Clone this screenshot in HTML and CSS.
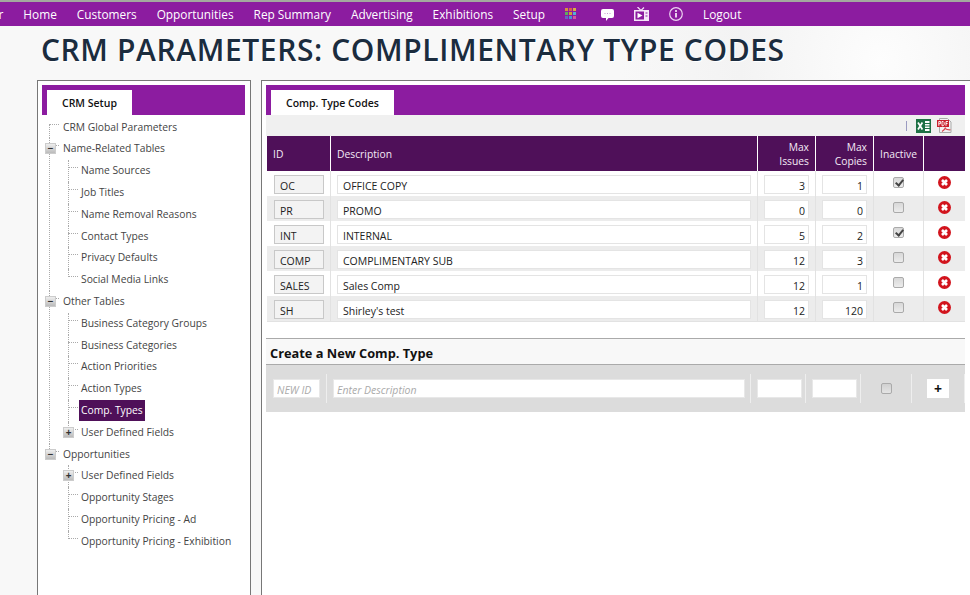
FILE: index.html
```html
<!DOCTYPE html>
<html>
	<head>
		<meta charset="utf-8" />
		<meta name="viewport" content="width=device-width, initial-scale=1" />
		<title>CRM Parameters</title>
		<link rel="stylesheet" href="styles.css">
	</head>
	<body>
		<svg class="defs" width="0" height="0">
			<symbol id="del" viewBox="0 0 13 13">
				<circle cx="6.500" cy="6.500" r="6.500" fill="#d2141d" />
				<path d="M4 4l5 5M9 4l-5 5" stroke="#fff" stroke-width="2.600" />
			</symbol>
		</svg>

		<!-- top menu -->
		<nav class="topnav">
			<a class="cut">r</a>
			<a>Home</a>
			<a>Customers</a>
			<a>Opportunities</a>
			<a>Rep Summary</a>
			<a>Advertising</a>
			<a>Exhibitions</a>
			<a>Setup</a>
			<svg class="ico grid" width="11" height="11" viewBox="0 0 11 11">
				<rect x="0" y="0" width="3" height="3" fill="#d9913d" /><rect x="4" y="0" width="3" height="3" fill="#d9604f" /><rect x="8" y="0" width="3" height="3" fill="#d8b03f" />
				<rect x="0" y="4" width="3" height="3" fill="#5cae5c" /><rect x="4" y="4" width="3" height="3" fill="#d0a030" /><rect x="8" y="4" width="3" height="3" fill="#55b0cf" />
				<rect x="0" y="8" width="3" height="3" fill="#6a62c0" /><rect x="4" y="8" width="3" height="3" fill="#4a93cf" /><rect x="8" y="8" width="3" height="3" fill="#d05a9a" />
			</svg>
			<svg class="ico chat" width="13" height="12" viewBox="0 0 13 12">
				<path d="M2 0h9a2 2 0 0 1 2 2v5a2 2 0 0 1-2 2H7.500L5 12V9H2a2 2 0 0 1-2-2V2a2 2 0 0 1 2-2z" fill="#fff" />
				<path d="M3.500 4.500h1M6 4.500h1M8.500 4.500h1" stroke="#c99ad2" />
			</svg>
			<svg class="ico tv" width="15" height="14" viewBox="0 0 15 14">
				<path d="M3.500 0l3.500 3.500L10 .5" fill="none" stroke="#f5e6f8" stroke-width="1.200" />
				<rect x="0" y="3" width="15" height="11" fill="#f5e6f8" />
				<rect x="1.500" y="4.500" width="8.500" height="8" fill="#8c1ca0" />
				<path d="M3.500 5.800l5 2.700-5 2.700z" fill="#fff" />
				<path d="M11.500 6h2M11.500 9h2" stroke="#8c1ca0" stroke-width="1.200" />
			</svg>
			<svg class="ico info" width="14" height="14" viewBox="0 0 14 14">
				<circle cx="7" cy="7" r="6.300" fill="none" stroke="#ecd4f0" stroke-width="1.200" />
				<path d="M7 6v4.500" stroke="#fff" stroke-width="1.600" />
				<circle cx="7" cy="3.900" r="1" fill="#fff" />
			</svg>
			<a class="logout">Logout</a>
		</nav>

		<h1 class="pagetitle">CRM Parameters: Complimentary Type Codes</h1>

		<div class="columns">
			<!-- left tree -->
			<aside class="panel side">
				<div class="tabbar"><span class="tab">CRM Setup</span></div>
				<ul class="tree">
					<li class="leaf first">CRM Global Parameters</li>
					<li class="open"><i class="box">−</i>Name-Related Tables
						<ul>
							<li class="leaf">Name Sources</li>
							<li class="leaf">Job Titles</li>
							<li class="leaf">Name Removal Reasons</li>
							<li class="leaf">Contact Types</li>
							<li class="leaf">Privacy Defaults</li>
							<li class="leaf">Social Media Links</li>
						</ul>
					</li>
					<li class="open"><i class="box">−</i>Other Tables
						<ul>
							<li class="leaf">Business Category Groups</li>
							<li class="leaf">Business Categories</li>
							<li class="leaf">Action Priorities</li>
							<li class="leaf">Action Types</li>
							<li class="leaf"><span class="current">Comp. Types</span></li>
							<li><i class="box">+</i>User Defined Fields</li>
						</ul>
					</li>
					<li class="open"><i class="box">−</i>Opportunities
						<ul>
							<li><i class="box">+</i>User Defined Fields</li>
							<li class="leaf">Opportunity Stages</li>
							<li class="leaf">Opportunity Pricing - Ad</li>
							<li class="leaf">Opportunity Pricing - Exhibition</li>
						</ul>
					</li>
				</ul>
			</aside>

			<!-- main grid -->
			<main class="panel content">
				<div class="tabbar"><span class="tab">Comp. Type Codes</span></div>
				<div class="toolbar">
					<span class="sep"></span>
					<svg width="15" height="14" viewBox="0 0 15 14">
						<rect x="0" y="0" width="15" height="14" fill="#1e7145" />
						<rect x="9" y="2" width="4.500" height="10" fill="#fff" />
						<path d="M9 4.500h5M9 7h5M9 9.500h5" stroke="#1e7145" />
						<path d="M2 3.500l4.400 7M6.400 3.500l-4.400 7" stroke="#fff" stroke-width="1.700" />
					</svg>
					<svg width="15" height="15" viewBox="0 0 15 15">
						<path d="M2.500 .5h8l3.500 3.500v10.500H2.500z" fill="#f2f2f2" stroke="#aaa" />
						<rect x="0" y="2" width="12" height="7" fill="#c9202c" />
						<path d="M1.800 7.800V3.500h1.800v2.200H1.800M5 7.800V3.500h1.200l1 1.200v1.800l-1 1.300zM9 7.800V3.500h2M9 5.500h1.600" fill="none" stroke="#fff" stroke-width=".9" />
						<path d="M5 13.500c2-1 3-2.500 3.500-4M8 10.500c1.500 1 3.500 1.500 5.500 1.300" fill="none" stroke="#d8434d" stroke-width="1.100" />
					</svg>
				</div>
				<table class="codes">
					<thead>
						<tr>
							<th class="c-id">ID</th>
							<th class="c-desc">Description</th>
							<th class="c-num">Max<br>Issues</th>
							<th class="c-num">Max<br>Copies</th>
							<th class="c-chk">Inactive</th>
							<th class="c-del"></th>
						</tr>
					</thead>
					<tbody>
						<tr>
							<td><input class="idbox" value="OC" readonly></td>
							<td><input class="descbox" value="OFFICE COPY"></td>
							<td><input class="numbox" value="3"></td>
							<td><input class="numbox" value="1"></td>
							<td class="mid"><input type="checkbox" checked></td>
							<td class="mid"><svg class="del"><use href="#del" /></svg></td>
						</tr>
						<tr>
							<td><input class="idbox" value="PR" readonly></td>
							<td><input class="descbox" value="PROMO"></td>
							<td><input class="numbox" value="0"></td>
							<td><input class="numbox" value="0"></td>
							<td class="mid"><input type="checkbox"></td>
							<td class="mid"><svg class="del"><use href="#del" /></svg></td>
						</tr>
						<tr>
							<td><input class="idbox" value="INT" readonly></td>
							<td><input class="descbox" value="INTERNAL"></td>
							<td><input class="numbox" value="5"></td>
							<td><input class="numbox" value="2"></td>
							<td class="mid"><input type="checkbox" checked></td>
							<td class="mid"><svg class="del"><use href="#del" /></svg></td>
						</tr>
						<tr>
							<td><input class="idbox" value="COMP" readonly></td>
							<td><input class="descbox" value="COMPLIMENTARY SUB"></td>
							<td><input class="numbox" value="12"></td>
							<td><input class="numbox" value="3"></td>
							<td class="mid"><input type="checkbox"></td>
							<td class="mid"><svg class="del"><use href="#del" /></svg></td>
						</tr>
						<tr>
							<td><input class="idbox" value="SALES" readonly></td>
							<td><input class="descbox" value="Sales Comp"></td>
							<td><input class="numbox" value="12"></td>
							<td><input class="numbox" value="1"></td>
							<td class="mid"><input type="checkbox"></td>
							<td class="mid"><svg class="del"><use href="#del" /></svg></td>
						</tr>
						<tr class="lastrow">
							<td><input class="idbox" value="SH" readonly></td>
							<td><input class="descbox" value="Shirley's test"></td>
							<td><input class="numbox" value="12"></td>
							<td><input class="numbox" value="120"></td>
							<td class="mid"><input type="checkbox"></td>
							<td class="mid"><svg class="del"><use href="#del" /></svg></td>
						</tr>
					</tbody>
				</table>

				<h2 class="newtitle">Create a New Comp. Type</h2>
				<form class="newrow">
					<div class="f f-id"><input placeholder="NEW ID"></div>
					<div class="f f-desc"><input placeholder="Enter Description"></div>
					<div class="f f-num"><input></div>
					<div class="f f-num"><input></div>
					<div class="f f-chk"><input type="checkbox"></div>
					<div class="f f-add"><button type="button">+</button></div>
				</form>
			</main>
		</div>
	</body>
</html>
```

FILE: styles.css
```css
html, body {
    margin: 0;
    height: 595px;
    overflow: hidden;
}

body {
    font-family: "Open Sans", "Noto Sans", sans-serif;
    font-size: 10.5px;
    color: #333;
    background-color: #f6f6f6;
    background-image: radial-gradient(circle at 880px 60px, #fdfdfd 0, #f3f3f3 140px, #f8f8f8 260px);
}

.defs {
    display: block;
    height: 0;
}

/* top menu */
.topnav {
    display: flex;
    align-items: center;
    gap: 20px;
    height: 24px;
    border-top: 2px solid #a3a89f;
    background-color: #8c1ca0;
    color: #fff;
    font-size: 11.85px;
    white-space: nowrap;
}

.topnav a {
    display: block;
}

.topnav .cut {
    margin-left: -1.5px;
}

.topnav .grid { margin-top: -1px; }
.topnav .chat { margin-left: 5px; margin-top: 2px; }

.pagetitle {
    margin: 0;
    padding: 6px 0 0 41px;
    height: 47px;
    box-sizing: border-box;
    font-size: 30px;
    line-height: 36px;
    font-weight: 600;
    letter-spacing: .6px;
    text-transform: uppercase;
    color: #1b2c3e;
    text-shadow: 1px 1px 0 #fff;
    white-space: nowrap;
}

.columns {
    display: flex;
    gap: 10px;
    margin-left: 37px;
    margin-top: 7px;
    width: 933px;
}

.panel {
    box-sizing: border-box;
    height: 540px;
    border: 1px solid #777;
    background-color: #fff;
    padding: 4px 5px 4px 4px;
}

.side {
    width: 214px;
    flex: none;
}

.content {
    flex: 1;
    border-right: none;
}

.tabbar {
    height: 30px;
    box-sizing: border-box;
    padding: 5px 0 0 5px;
    background-color: #8c1ca0;
}

.tab {
    display: inline-block;
    height: 25px;
    padding: 0 15px;
    background-color: #fff;
    color: #111;
    font-weight: 600;
    line-height: 26px;
}

/* tree */
.tree, .tree ul {
    list-style: none;
    margin: 0;
    padding: 0;
}

.tree {
    margin-top: 1.6px;
    padding-left: 21px;
    font-size: 10.3px;
    line-height: 21.8px;
    color: #444;
    white-space: nowrap;
}

.tree ul {
    padding-left: 18px;
}

.tree li {
    position: relative;
}

/* dotted connectors */
.tree li::before {
    content: "";
    position: absolute;
    left: -14px;
    top: 0;
    bottom: 0;
    border-left: 1px dotted #aaa;
}

.tree ul > li::before {
    left: -13px;
}

.tree > li.first::before {
    top: 7px;
}

.tree ul > li:last-child::before {
    bottom: auto;
    height: 8px;
}

.tree > li:last-child::before {
    height: 11px;
    bottom: auto;
}

.tree li::after {
    content: "";
    position: absolute;
    left: -14px;
    top: 7px;
    width: 10px;
    border-top: 1px dotted #aaa;
}

.tree ul li::after {
    left: -13px;
}

.box {
    position: absolute;
    left: -18px;
    top: 5px;
    z-index: 1;
    width: 11px;
    height: 11px;
    box-sizing: border-box;
    background: linear-gradient(#eee, #bbb);
    border: 1px solid #ccc;
    color: #333;
    font-style: normal;
    font-weight: 700;
    font-size: 10px;
    line-height: 8px;
    text-align: center;
}

.current {
    display: inline-block;
    margin-left: -2px;
    padding: 0 2px;
    background-color: #4f1059;
    color: #fff;
    line-height: 21px;
}

/* toolbar over the grid */
.toolbar {
    display: flex;
    align-items: center;
    justify-content: flex-end;
    gap: 6px;
    height: 21px;
    padding-right: 13px;
    background-color: #f0f0f0;
}

.toolbar .sep {
    width: 1px;
    height: 10px;
    margin-right: 3px;
    background-color: #9a9ac0;
}

/* grid */
.codes {
    width: 698px;
    margin-left: 1px;
    border-collapse: separate;
    border-spacing: 0;
    table-layout: fixed;
}

.codes th {
    height: 35px;
    padding: 0 6px;
    background-color: #4f1059;
    color: #f4eaf6;
    font-size: 10.3px;
    font-weight: 400;
    line-height: 14px;
    text-align: left;
    border-left: 1px solid #fff;
}

.codes th:first-child {
    border-left: none;
}

.c-id { width: 51px; }
.c-desc { width: 414px; }
.codes th.c-num { width: 45px; text-align: right; }
.codes th.c-chk { width: 37px; text-align: center; }

.codes td {
    height: 25px;
    padding: 4px 6px 0;
    box-sizing: border-box;
    vertical-align: top;
    border-left: 1px solid #e2e2e2;
}

.codes .lastrow td {
    height: 26px;
    border-bottom: 1px solid #e2e2e2;
}

.codes td:first-child {
    border-left: none;
    padding-left: 7px;
}

.codes tbody tr:nth-child(even) td {
    background-color: #ececec;
}

.codes td.mid {
    text-align: center;
    padding-top: 5px;
}

.codes input {
    display: block;
    box-sizing: border-box;
    width: 100%;
    height: 19px;
    margin: 0;
    padding: 2px 5px 0;
    font: inherit;
    color: #222;
    background-color: #fff;
    border: 1px solid #e4e4e4;
    outline: none;
}

.codes .idbox {
    width: 50px;
    background-color: #f3f3f3;
    border-color: #c8c8c8;
}

.codes .numbox {
    text-align: right;
    padding-right: 3px;
}

input[type="checkbox"] {
    appearance: none;
    box-sizing: border-box;
    position: relative;
    width: 11px;
    height: 11px;
    margin: 0;
    padding: 0;
    background: linear-gradient(#d8d8d8, #ececec);
    border: 1px solid #aaa;
    border-radius: 2px;
}

.codes input[type="checkbox"] {
    width: 11px;
    height: 11px;
    margin: 1px auto 0;
    padding: 0;
    background: linear-gradient(#d8d8d8, #ececec);
    border: 1px solid #aaa;
}

input[type="checkbox"]:checked::after {
    content: "";
    position: absolute;
    left: 3px;
    top: 0;
    width: 3px;
    height: 6px;
    border: solid #444;
    border-width: 0 2px 2px 0;
    transform: rotate(40deg);
}

.del {
    display: block;
    width: 13px;
    height: 13px;
    margin: 0 auto;
}

/* new row */
.newtitle {
    margin: 16px 0 0;
    height: 27px;
    box-sizing: border-box;
    padding-left: 4px;
    border-top: 1px solid #aaa;
    border-bottom: 1px solid #aaa;
    background-color: #f8f8f8;
    color: #111;
    font-size: 12.8px;
    font-weight: 700;
    line-height: 28px;
}

.newrow {
    display: flex;
    align-items: center;
    height: 47px;
    background-color: #dcdcdc;
}

.f {
    box-sizing: border-box;
    flex: none;
    height: 29px;
    display: flex;
    align-items: center;
    padding: 0 5px 0 6px;
    border-right: 1px solid #eee;
}

.f input {
    box-sizing: border-box;
    width: 100%;
    height: 19px;
    margin: 0;
    padding: 2px 3px 0;
    font: inherit;
    background-color: #fff;
    border: 1px solid #e8e8e8;
    outline: none;
}

.f input::placeholder {
    color: #aaa;
    font-style: italic;
}

.f-id { width: 61px; padding: 0 6px 0 7px; }
.f-desc { width: 424px; }
.f-num { width: 55px; padding: 0 3px 0 6px; }
.f-chk { width: 51px; padding: 0; justify-content: center; }
.f-add { width: 53px; padding: 0; justify-content: center; }

.f input[type="checkbox"] {
    width: 11px;
    height: 11px;
    padding: 0;
    background: linear-gradient(#d0d0d0, #e4e4e4);
    border: 1px solid #aaa;
}

.f button {
    width: 22px;
    height: 19px;
    padding: 0;
    border: none;
    background-color: #fff;
    color: #111;
    font: 700 14px/17px "Open Sans", sans-serif;
}
```
